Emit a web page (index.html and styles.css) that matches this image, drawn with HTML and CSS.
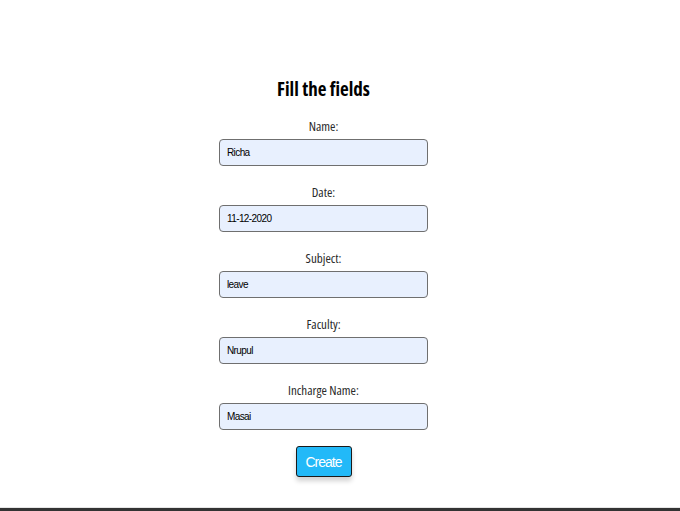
FILE: index.html
```html
<!DOCTYPE html>
<html>
<head>
<meta charset="utf-8">
<link rel="stylesheet" href="styles.css">
</head>
<body>
<main class="page">
  <form class="form">
    <h2 class="title">Fill the fields</h2>
    <div class="field">
      <label class="label">Name:</label>
      <input class="input" type="text" value="Richa">
    </div>
    <div class="field">
      <label class="label">Date:</label>
      <input class="input" type="text" value="11-12-2020">
    </div>
    <div class="field">
      <label class="label">Subject:</label>
      <input class="input" type="text" value="leave">
    </div>
    <div class="field">
      <label class="label">Faculty:</label>
      <input class="input" type="text" value="Nrupul">
    </div>
    <div class="field">
      <label class="label">Incharge Name:</label>
      <input class="input" type="text" value="Masai">
    </div>
    <button class="btn" type="button">Create</button>
  </form>
</main>
<footer class="bar"></footer>
</body>
</html>
```
FILE: styles.css
```css
html, body {
  margin: 0;
  padding: 0;
  background: #fff;
}
body {
  height: 511px;
  display: flex;
  flex-direction: column;
  overflow: hidden;
}
.page {
  flex: 1;
  width: 647px;
}
.form {
  display: flex;
  flex-direction: column;
  align-items: center;
  padding-top: 77px;
}
.title {
  margin: 0 0 17px;
  font-family: "Open Sans", sans-serif;
  font-stretch: condensed;
  font-weight: 700;
  font-size: 19px;
  line-height: 24px;
  color: #000;
}
.field {
  display: flex;
  flex-direction: column;
  align-items: center;
  margin-bottom: 18px;
}
.field:last-of-type {
  margin-bottom: 16px;
}
.label {
  font-family: "Open Sans", sans-serif;
  font-stretch: condensed;
  font-size: 13px;
  line-height: 17px;
  color: #2a2a2a;
  margin-bottom: 4px;
}
.input {
  box-sizing: border-box;
  width: 209px;
  height: 27px;
  margin: 0;
  padding: 0 7px;
  border: 1px solid #6f6f6f;
  border-radius: 4px;
  background: #e8f0fe;
  font-family: "Liberation Sans", Arial, sans-serif;
  font-size: 10px;
  letter-spacing: -0.6px;
  color: #000;
  outline: none;
}
.btn {
  box-sizing: border-box;
  width: 56px;
  height: 31px;
  margin: 0;
  background: #22b9f8;
  border: 1px solid #1a1a1a;
  border-radius: 3px;
  color: #fff;
  font-family: "Liberation Sans", Arial, sans-serif;
  font-size: 14px;
  letter-spacing: -1px;
  box-shadow: 0 4px 5px rgba(0, 0, 0, 0.18);
  padding: 0;
}
.bar {
  height: 3px;
  background: #333;
  border-top: 1px solid #e6e6e6;
}
```
